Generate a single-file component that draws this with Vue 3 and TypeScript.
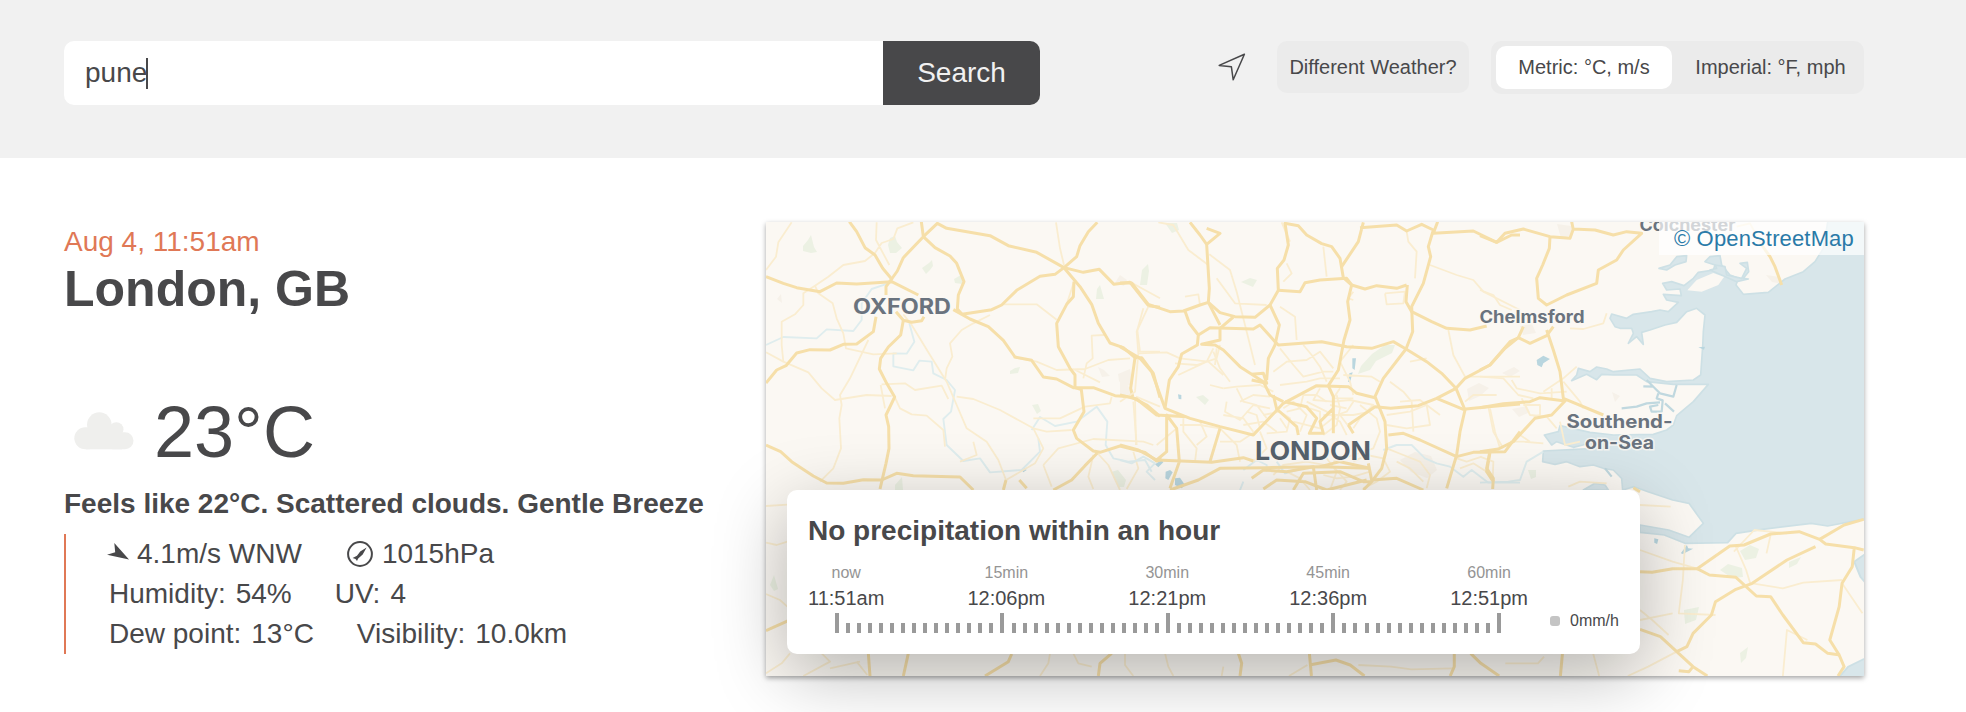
<script setup lang="ts">
import { ref } from 'vue'

interface Slot {
  offset: string
  time: string
}

const query = ref('pune')
const slots: Slot[] = [
  { offset: 'now', time: '11:51am' },
  { offset: '15min', time: '12:06pm' },
  { offset: '30min', time: '12:21pm' },
  { offset: '45min', time: '12:36pm' },
  { offset: '60min', time: '12:51pm' },
]
const minutes = Array.from({ length: 61 }, (_, i) => i)

// Road network, one group per map sector
const sectors = [
  {
    transform: 'translate(760 215) scale(.333333)',
    major: [
      'M18 185L70 205L110 218L180 230L230 204L290 207L395 200L475 240',
      'M268 20L290 50L315 98L345 120L368 160L395 192L378 215L378 240',
      'M484 20L490 65L430 128L412 168L395 192',
      'M490 65L532 25L560 40L690 62L745 92L830 112L912 158',
      'M490 65L525 98L570 123L590 145L612 200L595 240L592 282L606 298',
      'M580 284L630 312L685 335L730 376L765 426L815 436L850 486L890 492L940 518L1000 518L1065 542L1112 545L1160 570L1200 604',
      'M606 298L695 284L725 270L770 226L840 184L885 178L912 158L950 125L960 92L985 50L1012 22',
      'M912 158L970 172L1018 163L1062 208L1110 202L1165 272L1200 277',
      'M912 158L960 215L995 268L1015 325L1050 384L1090 398L1125 428L1145 428L1180 475L1200 548',
      'M942 200L940 245L920 268L890 325L895 395L930 460L945 480L945 518L964 524L972 590L940 645L950 670L1000 708L1020 712L1080 693L1155 712L1190 738L1205 732',
      'M1125 428L1112 520L1118 545',
      'M18 504L50 465L78 452L110 414L150 404L210 405L250 388L290 387L340 350L348 305',
      'M408 290L430 316L455 322L485 317L492 305M430 316L422 360L385 396L362 430L358 462L380 505L404 546L378 600L386 635L387 700L378 745L360 822',
      'M18 690L62 710L95 740L160 783L200 804L250 805L310 794L365 795L410 775L460 782L600 786L640 825',
      'M730 825L738 795M778 795L800 820M880 825L935 795L975 752L1012 714',
    ],
    minor: [
      'M95 22L55 82L48 125L18 165M350 22L348 75L388 150M460 22L412 40L400 72L365 84L345 114L315 138L250 150L205 185L165 212L130 235L130 270L105 298L65 320L65 390L70 440M165 212L175 235L218 265L230 310L250 355L258 400L340 418L410 415',
      'M18 412L70 440L145 472L185 520L225 555L320 540L395 543M325 375L270 490L240 540L245 570L238 610L243 700L220 760L180 800',
      'M430 298L455 330L510 420L560 500L590 570L620 640L680 680L715 735L738 795',
      'M362 510L375 580M365 508L435 505L465 525L545 512L565 552M590 545L640 552L720 585L820 640M404 546L420 580L455 598L500 602L550 645L555 695',
      'M690 300L640 325L605 345L570 385L577 425L560 460L555 495M730 268L830 268L890 314M888 22L900 100L912 150M942 200L920 268M1032 360L995 362L998 430L980 445L970 490M940 462L1020 502M760 427L830 440L890 465L975 462L1045 435L1110 430M1200 250L1145 220L1110 200M1150 280L1132 345L1140 410L1200 410',
      'M820 640L860 650L935 645M738 795L825 745L850 700L820 640M850 750L875 815M850 750L895 700L1000 672L1150 680L1180 690M1125 550L1128 690M820 610L900 610L975 575L1050 565L1055 545M1000 720L985 785L1000 822M640 680L650 720L600 740M1100 822L1135 760L1120 710M1012 714L1045 750L1080 825M1128 545L1200 575',
    ],
    rivers: [
      'M18 390L70 366L170 370L200 343L280 348L305 315L305 265L335 222L385 205M448 325L463 380L440 416L400 415L400 454L460 466L478 437L515 440L520 475L560 495L585 525L573 590L550 612L560 690L610 738L660 730L690 772L785 765L840 710L835 670',
      'M815 645L840 606L885 633L950 620L1010 575L1042 620L1037 690L1060 730L1105 740L1155 735L1175 770',
    ],
  },
  {
    transform: 'translate(1120 215) scale(.333333)',
    major: [
      'M210 22L240 60L260 88L300 55L260 40M260 88L268 220L265 262L300 330',
      'M0 204L35 204L85 268L150 290L190 288L240 270L265 262L300 293L345 305L405 307L450 270L475 226L472 160L492 135L505 90L495 25L535 32L560 60L605 86L635 95L660 130L670 188L695 210',
      'M195 288L208 325L235 360L232 390L185 417L175 455L148 495L135 580',
      'M235 360L270 338L400 342L420 330L465 380L475 390L605 380L680 395L755 400L820 380L858 402L920 440L965 475L1008 520L1035 585L1020 650L1010 720L980 820',
      'M340 306L300 340L300 375L245 388L285 390L310 405L360 455L430 500L450 540L490 560',
      'M395 478L430 475L440 505L395 495M450 270L478 330L465 390L445 430L440 495',
      'M475 226L540 230L555 203L600 195L680 190L695 210L735 222L770 212L830 220L860 210',
      'M730 22L715 80L665 155M720 38L760 35L830 30L860 48L905 28L940 45L925 95L932 125L910 205L875 275L878 350L858 402L790 490L765 545L795 620L800 700L785 760L755 800',
      'M953 20L940 55L1060 48L1130 82L1175 60L1200 60M862 210L858 260L875 290L935 320L980 340L1050 345L1100 333',
      'M695 210L683 260L690 315L672 375L655 465L625 512M1200 366L1170 380L1110 450L1035 490L1008 520L950 550L895 572L812 580L765 575L685 630',
      'M0 395L60 430L95 470L135 580L210 610L300 635L400 660L490 565L590 512L685 515L710 535L765 548M0 540L50 552L110 600L200 605M950 550L1030 583L1105 575L1200 567',
      'M460 540L470 582L530 635L535 660M495 560L560 575L590 610L568 655L610 655L600 620L640 580M625 512L640 545L640 655M0 690L55 705L110 735L275 742L370 728L400 738M110 735L140 710L140 600L170 640L178 740L150 820M300 640L270 740M150 825L235 795L300 760L440 758L600 755L750 760M745 745L755 795L830 790L910 825M805 660L850 655L900 675L1010 725L1060 712L1155 710L1200 650M1110 712L1100 770L1120 800',
      'M395 790L430 765L500 770L580 755L590 825M520 825L550 775L660 770L730 800L755 800L730 825M600 755L660 740L750 760M430 822L470 795L555 800L620 825L740 795M685 630L700 655',
    ],
    minor: [
      'M115 22L160 30L205 105L265 150M268 118L330 165L350 230L385 370L405 450M195 245L235 238L240 270M290 190L345 265L440 270M85 275L50 350L55 415L45 530L0 560M55 415L140 412L180 430L265 440L310 480',
      'M485 22L510 80M500 145L515 175L490 200M610 95L620 185M480 275L525 305L530 375M700 255L685 250L700 230M795 235L855 230L850 265L800 268L795 235M860 50L865 80L890 110L885 190M930 150L1010 180L1060 195L1090 230L1200 285M985 345L1000 420L1035 485L1200 485M870 440L920 430M810 500L850 530L875 560L880 650M840 560L900 555L960 600',
      'M310 520L350 515L420 510L460 530M320 560L315 590L360 615L400 570L450 580M350 520L370 560L410 570L440 610M310 600L370 610L400 650M460 470L500 440L560 435L600 410L640 460M480 400L520 450L550 485L610 470L640 470M550 390L575 420L600 455L620 500M700 390L660 440L690 500L700 540M670 480L755 485L780 500M480 510L560 500L600 490L660 490M490 580L520 560L560 600L540 650M600 520L580 555L640 560L690 555L760 570L720 610L700 640M640 600L700 600L750 590M560 560L620 590L660 620L680 660M520 620L600 640L650 600L680 590L700 560M720 570L770 610L780 650L760 700L700 720L640 740M650 540L660 580L650 630L610 660',
      'M165 445L230 450L290 430L300 390M175 480L260 440L280 400M280 410L300 460L330 500M190 610L190 650L230 700L225 740M240 620L260 665L230 690M300 640L350 690L360 740M110 690L170 640M40 560L50 690M420 640L360 680L300 680M420 650L440 700L400 740M800 600L870 590L920 570L930 630L860 640L800 630M1105 575L1120 650L1150 700M800 700L850 720L900 740L930 780L920 820M830 740L870 760L910 800M700 740L740 720L790 730L810 770L770 800L730 820M460 780L490 750L560 740L640 755L680 800L660 825M500 770L540 790L570 825M610 780L650 790L700 785L750 770M620 730L650 770L630 825',
      'M430 600L480 590L510 610L500 650L440 655M370 630L430 620L470 650M360 560L400 540L450 545M380 590L410 600L420 640M500 590L540 580L550 540L590 540L620 560M570 580L600 590L600 640M610 600L660 600L690 640M630 570L680 580M480 610L500 640M660 520L640 550L700 550M270 510L310 520M290 400L285 450M1010 730L1040 740L1085 725M1020 760L1060 745L1100 770M1035 560L1060 540L1130 540M180 630L240 630L300 640',
    ],
    rivers: [
      'M0 735L35 745L70 725L105 745L80 770L105 795M370 765L410 735L440 750L440 770M470 740L495 775L530 765M790 705L830 690L875 690L915 730L950 745L990 755L1030 785L1055 765L1105 803L1200 803M370 800L360 825',
    ],
  },
  {
    transform: 'translate(1480 215) scale(.333333)',
    major: [
      'M0 62L50 82L75 55L130 42L210 65L270 70L280 42L345 45L400 60L440 50L485 55L430 105L410 135L355 165L350 205L260 240L200 270L175 250L170 190L188 150L208 100L210 65M275 20L280 45',
      'M0 465L30 450L75 400L115 368L130 335M115 368L150 385L200 362L220 335M200 345L220 405L240 470L250 550L370 600M0 578L70 566L150 560L180 548L255 558L215 600L165 610L100 680L55 702L0 710',
      'M845 90L870 125L885 155L905 210M30 708L20 760L40 790L38 822M460 818L480 830',
    ],
    minor: [
      'M0 225L40 240L60 270L95 285M270 340L310 342L370 325L380 295M0 485L70 490L115 540L160 550M95 495L110 520L180 535L260 530M190 530L250 490L290 455M215 520L215 555M250 500L300 560L310 580M125 550L150 600L200 605L230 640M130 570L180 570L180 600L160 605M30 580L45 650L60 700M90 680L130 680L190 685M120 660L150 680M0 725L40 740L38 800M240 620L255 690L300 680M265 815L300 800L380 805M770 35L810 25L845 90',
    ],
    rivers: ['M0 803L85 800L120 795L140 740L190 710'],
  },
  {
    transform: 'translate(760 480) scale(.333333)',
    major: [
      'M18 452L85 422M325 520L330 588M445 520L430 588M755 522L745 545L675 588M1055 520L1020 550L1015 588M1435 520L1445 550L1440 588',
    ],
    minor: [
      'M18 78L82 74M18 188L50 195L82 185M18 342L60 360L82 380M18 580L65 550L90 520M185 520L210 545L130 588M290 545L322 585M210 565L300 545M870 520L865 550L840 588M940 520L955 550L995 560M1095 520L1095 555L1120 588M1215 520L1225 560L1240 588M1390 560L1385 588',
    ],
    rivers: [],
  },
  {
    transform: 'translate(1240 480) scale(.408163 .333333)',
    major: [
      'M980 275L1010 277L1060 266L1120 266L1200 198L1235 195L1300 162L1370 155L1420 178L1435 192L1505 203L1500 260L1475 310L1468 380L1445 480L1468 525L1480 560L1465 588',
      'M1420 178L1480 135L1528 118M1120 266L1150 285L1215 292L1265 348L1300 350L1330 405L1380 488L1410 492L1440 520L1470 525M1410 200L1340 240L1255 310L1215 328L1165 365L1155 405L1110 460L1095 500L1070 515M980 448L1030 470L1070 515L1110 560L1145 588M1110 560L1100 575L1075 572M1505 203L1528 210',
      'M170 520L175 588M170 555L235 540L270 555L305 588M525 520L525 560L515 588M565 520L590 550L635 588M790 520L785 588',
    ],
    minor: [
      'M980 210L1060 245L1120 266M1090 195L1085 300L1075 400L1165 405M980 420L1060 400M1300 165L1290 220M1215 200L1240 270L1250 310M1255 310L1330 325L1380 308L1475 300M1475 310L1525 400M1390 480L1340 450L1330 588M950 588L1000 560L1070 515M980 75L1055 80M865 520L880 588M120 588L165 555M290 555L370 560L420 568L520 565M650 550L730 550L745 530M980 390L1010 420L1050 465M1210 215L1260 150L1340 160',
    ],
    rivers: [],
  },
]

const woods = [
  'M890 238l5-2 2 6 5 6-6 5h-6l-2-8z',
  'M803 246l5-6 3-5 3 12 3 5-6 1-8-2z',
  'M922 268l7-5 3-3 1 6-3 4-4 4z',
  'M954 279l7-4 3 3-2 6-7-1z',
  'M1142 270l6-6 1 7-2 14-7 0z',
  'M1097 289l3-4 4 14-8 0z',
  'M1010 371l5-3 5-1-2 6-8 1z',
  'M1032 405l6-1 3 7-4 3z',
  'M895 485l7-8 1 13-8 0z',
  'M1111 472l7-2 8 10-2 7-5 0z',
  'M1372 354l13-9 10 0-3 8-16 8-6 9-12 4 3-8z',
  'M1241 282l9-4 7 2-4 7z',
  'M1196 397l7-2 6 5-4 5z',
  'M1165 223l12 0 2 7-7 3z',
  'M1740 551l10-6 9 4-3 9-11 2z',
  'M1720 570l8-6 14 4 1 9-11 1z',
  'M1684 610l15-3-3 13-11 4z',
  'M1740 653l8-6-2 11-5 5z',
  'M1789 562l12-5-4 7-8 4z',
  'M770 585l4-10 4 14-4 2z',
  'M1528 470l8 0 0 7-5 2z',
]

const suburbs = [
  'M1118 374l12-5 3 15-9 3-5-6z',
  'M1115 283l5-8 7 5-3 6z',
  'M1467 389l12-6 10 5-9 8-11 5z',
  'M1557 224l14 2 2 9-12 3z',
  'M1512 409l15-3 3 6-11 5z',
  'M1120 380l12 9-3 9-9-2z',
  'M1502 373l12-6 6 4-10 6z',
  'M1400 460l15-8 16 4 6 14-10 8-16-6z',
  'M777 299l4-5 1 9z',
  'M1098 367l6 3 6 6-8 1z',
  'M1520 326l12-2 4 9-13 2z',
  'M1612 392l8 4-5 6z',
  'M1766 275l14 2 3 7-11-2z',
]
</script>

<template>
  <div class="page">
    <header class="topbar">
      <form class="search" @submit.prevent>
        <div class="field"><span>{{ query }}</span><i class="caret"></i></div>
        <button class="submit" type="submit">Search</button>
      </form>
      <div class="tools">
        <svg class="locate" viewBox="0 0 28 28" aria-hidden="true">
          <path d="M26.4 1.2L1.2 12.4L13.4 13.8L15.2 26.8Z" />
        </svg>
        <button class="different" type="button">Different Weather?</button>
        <div class="units">
          <span class="unit active">Metric: °C, m/s</span>
          <span class="unit">Imperial: °F, mph</span>
        </div>
      </div>
    </header>

    <main class="content">
      <section class="current">
        <p class="date">Aug 4, 11:51am</p>
        <h1 class="city">London, GB</h1>
        <div class="temperature">
          <svg class="cloud" viewBox="0 0 60 38" aria-hidden="true">
            <rect x="0.300" y="15.300" width="25" height="22" rx="11" />
            <circle cx="25.300" cy="12.600" r="12.300" />
            <circle cx="42.300" cy="17.400" r="7.200" />
            <rect x="30" y="20.300" width="29.500" height="17" rx="8.500" />
            <rect x="12" y="16" width="36" height="21.300" />
          </svg>
          <span>23°C</span>
        </div>
        <p class="feels">Feels like 22°C. Scattered clouds. Gentle Breeze</p>
        <ul class="details">
          <li>
            <span class="item wind">
              <svg class="wind-icon" viewBox="0 0 22 17" aria-hidden="true">
                <path d="M7.3 0L22 16.5L0 11.8L8.2 9.2Z" />
              </svg>4.1m/s WNW
            </span>
            <span class="item">
              <svg class="pressure-icon" viewBox="0 0 26 26" aria-hidden="true">
                <circle cx="13" cy="13" r="11.9" />
                <path d="M19.6 6.4L15.700 13.6L11.200 17.6L10 20L8.500 18L5.600 16.9L10 14.8L13.200 10.6Z" />
              </svg>1015hPa
            </span>
          </li>
          <li>
            <span class="item"><b>Humidity:</b>54%</span>
            <span class="item"><b>UV:</b>4</span>
          </li>
          <li>
            <span class="item"><b>Dew point:</b>13°C</span>
            <span class="item"><b>Visibility:</b>10.0km</span>
          </li>
        </ul>
      </section>

      <section class="map">
        <svg class="tiles" viewBox="766 222 1098 454" aria-hidden="true">
          <rect class="land" x="766" y="222" width="1098" height="454" />
          <path v-for="d in suburbs" :key="d" class="suburb" :d="d" />
          <path v-for="d in woods" :key="d" class="wood" :d="d" />
          <g transform="translate(1480 215) scale(.333333)">
            <path
              class="sea"
              d="M1165 10L1045 10L1030 100L1005 140L970 170L915 192L865 232L790 238L768 210L775 190L750 180L725 150L720 122L690 125L675 140L705 150L700 165L655 172L640 190L612 212L575 200L548 205L560 225L600 222L604 242L550 238L560 255L595 262L565 290L540 285L515 290L460 298L440 310L395 297L390 310L405 335L420 340L455 340L460 355L445 385L470 365L490 388L485 352L510 345L555 330L590 322L620 290L650 280L675 300L670 350L668 395L662 480L640 495L560 500L510 490L480 462L400 470L380 462L350 456L330 470L295 460L290 480L275 497L320 478L350 494L365 478L400 480L470 480L500 500L580 508L685 508L640 560L590 602L580 630L560 645L520 658L400 660L330 652L240 632L235 650L193 660L215 690L230 680L280 697L320 687L345 700L190 708L188 740L225 748L260 740L300 755L340 750L370 760L400 765L425 790L428 825L462 815L504 830L578 855L627 865L670 925L627 967L566 945L480 930L480 952L553 960L615 985L743 983L768 955L847 943L994 925L1043 933L1165 910Z"
            />
            <path class="sea" d="M690 165L710 160L705 150L735 155L740 180L785 190L800 160L780 145L802 142L806 170L790 190L805 192L770 200ZM537 160L570 150L590 125L620 122L618 140L585 150L560 165ZM310 825L345 805L375 810L385 825Z" />
            <path class="isle" d="M622 226L650 195L700 174L732 186L715 210L665 230Z" />
            <path class="creek" d="M490 514L520 515L540 535L580 545L590 510M535 535L530 550L548 556L545 590L515 590L510 575L535 570M540 562L500 565L470 575L425 580M555 565L582 590M500 495L535 530M375 760L395 785" />
            <path class="lake" d="M170 435L190 422L210 432L190 445L185 457L172 450ZM655 397L675 395L672 404Z" />
          </g>
          <g transform="translate(1240 480) scale(.408163 .333333)">
            <path class="sea" d="M1540 215L1505 245L1520 290L1540 320ZM1540 530L1490 560L1465 595H1540Z" />
            <path class="lake" d="M1015 175L1025 178L1022 192L1015 188ZM1080 220L1095 195L1098 205L1110 206L1085 222Z" />
          </g>
          <g transform="translate(1120 215) scale(.333333)">
            <path class="lake" d="M697 430H708L704 465L697 460ZM688 475L698 472L690 502L684 500ZM174 538L184 540V553L176 552ZM105 748L125 735L130 742L115 757ZM137 770L150 765L158 772L145 795L136 790ZM165 790L180 788L195 810L185 820L165 810ZM-295 765L-288 758L-280 765L-290 772Z" />
          </g>
          <g v-for="s in sectors" :key="s.transform" :transform="s.transform">
            <path v-for="d in s.rivers" :key="d" class="river" :d="d" />
            <path v-for="d in s.minor" :key="d" class="minor" :d="d" />
            <path v-for="d in s.major" :key="d" class="major" :d="d" />
          </g>
          <g class="labels">
            <text x="853" y="313.500" font-size="21" textLength="98" lengthAdjust="spacingAndGlyphs">OXFORD</text>
            <text class="capital" x="1255" y="459.500" font-size="26" textLength="116" lengthAdjust="spacingAndGlyphs">LONDON</text>
            <text x="1479.500" y="322.500" font-size="17" textLength="105" lengthAdjust="spacingAndGlyphs">Chelmsford</text>
            <text x="1566.500" y="428" font-size="18.500" textLength="106" lengthAdjust="spacingAndGlyphs">Southend-</text>
            <text x="1585" y="448.500" font-size="18.500" textLength="69" lengthAdjust="spacingAndGlyphs">on-Sea</text>
            <text x="1639.500" y="231" font-size="17" textLength="96" lengthAdjust="spacingAndGlyphs">Colchester</text>
          </g>
        </svg>
        <div class="attribution">© OpenStreetMap</div>
        <div class="rain">
          <h2>No precipitation within an hour</h2>
          <div class="slots">
            <div v-for="s in slots" :key="s.time" class="slot">
              <small>{{ s.offset }}</small>
              <span>{{ s.time }}</span>
            </div>
          </div>
          <div class="scale">
            <div class="ruler">
              <i v-for="m in minutes" :key="m" :class="{ tall: m % 15 === 0 }"></i>
            </div>
            <div class="legend"><i></i>0mm/h</div>
          </div>
        </div>
      </section>
    </main>
  </div>
</template>

<style>
body {
  margin: 0;
  background: #fff;
}
</style>

<style scoped>
.page {
  width: 1966px;
  height: 712px;
  overflow: hidden;
  font-family: "Liberation Sans", Arial, sans-serif;
  font-size: 28px;
  color: #48484a;
  background: #fff;
}
p, h1, h2, ul {
  margin: 0;
  padding: 0;
}
button {
  border: 0;
  padding: 0;
  font: inherit;
  color: inherit;
}
.topbar {
  box-sizing: border-box;
  height: 158px;
  padding: 41px 102px 0 64px;
  display: flex;
  justify-content: space-between;
  align-items: flex-start;
  background: #f1f1f1;
}
.search {
  display: flex;
  width: 976px;
  height: 64px;
  border-radius: 10px;
  overflow: hidden;
}
.field {
  flex: 1;
  display: flex;
  align-items: center;
  padding-left: 21px;
  background: #fff;
}
.caret {
  width: 2px;
  height: 31px;
  margin-left: -1px;
  background: #48484a;
}
.submit {
  width: 157px;
  background: #48484a;
  color: #f1f1f1;
}
.tools {
  display: flex;
  font-size: 20px;
}
.locate {
  width: 28px;
  height: 28px;
  margin: 12px 31px 0 0;
}
.locate path {
  fill: none;
  stroke: #48484a;
  stroke-width: 1.500;
  stroke-linejoin: round;
}
.different {
  width: 192px;
  height: 52px;
  margin-right: 22px;
  border-radius: 10px;
  background: #ebebeb;
}
.units {
  box-sizing: border-box;
  display: flex;
  width: 373px;
  height: 53px;
  padding: 5px;
  border-radius: 10px;
  background: #ebebeb;
}
.unit {
  width: 176px;
  height: 43px;
  line-height: 43px;
  text-align: center;
  border-radius: 10px;
  flex: none;
}
.unit + .unit {
  width: 197px;
}
.active {
  background: #fff;
}
.content {
  display: flex;
  padding: 64px 102px 0 64px;
}
.current {
  width: 702px;
}
.date {
  line-height: 40px;
  color: #e07856;
}
.city {
  font-size: 50px;
  line-height: 54px;
}
.temperature {
  display: flex;
  align-items: center;
  height: 108px;
  margin-top: 62px;
  font-size: 72px;
}
.cloud {
  width: 60px;
  height: 38px;
  margin: -3px 20px 0 10px;
  fill: #efefed;
}
.feels {
  line-height: 40px;
  margin: -2px 0 10px;
  font-weight: 700;
  white-space: nowrap;
}
.details {
  height: 120px;
  padding-left: 43px;
  border-left: 2px solid #e07856;
  list-style: none;
}
.details li {
  display: flex;
  gap: 43px;
  line-height: 40px;
  white-space: nowrap;
}
.item {
  display: flex;
  align-items: center;
}
.item b {
  font-weight: 400;
  margin-right: 10px;
}
.wind {
  margin-right: 2px;
}
.wind-icon {
  width: 22px;
  height: 17px;
  margin: -5px 8px 0 -2px;
}
.wind-icon path,
.pressure-icon path {
  fill: #48484a;
}
.pressure-icon {
  width: 26px;
  height: 26px;
  margin-right: 9px;
}
.pressure-icon circle {
  fill: none;
  stroke: #48484a;
  stroke-width: 2;
}
.map {
  position: relative;
  width: 1098px;
  height: 454px;
  box-shadow: 0 2px 5px rgba(0, 0, 0, 0.36);
}
.tiles {
  display: block;
  width: 1098px;
  height: 454px;
}
.land,
.isle {
  fill: #fbf8f3;
}
.wood {
  fill: #ecf1e3;
}
.suburb {
  fill: #f6f1e9;
}
.sea {
  fill: #d8e6ea;
  stroke: #cde0e5;
  stroke-width: 5;
  stroke-linejoin: round;
}
.lake {
  fill: #b9d6df;
}
.creek,
.river,
.minor,
.major {
  fill: none;
  stroke-linejoin: round;
  vector-effect: non-scaling-stroke;
}
.creek {
  stroke: #c0d8df;
  stroke-width: 2.200;
}
.river {
  stroke: #dfedee;
  stroke-width: 1.900;
}
.minor {
  stroke: #faedd0;
  stroke-width: 1.800;
}
.major {
  stroke: #f6dfa9;
  stroke-width: 3;
}
.labels text {
  font-family: Inter, "Liberation Sans", sans-serif;
  font-weight: 650;
  fill: #6a737e;
  stroke: #fbf8f3;
  stroke-width: 3;
  stroke-opacity: 0.8;
  paint-order: stroke;
}
.labels .capital {
  fill: #56616c;
}
.attribution {
  position: absolute;
  top: 0;
  right: 0;
  width: 205px;
  height: 33px;
  box-sizing: border-box;
  padding-left: 15px;
  line-height: 33px;
  font-size: 22px;
  letter-spacing: 0.150px;
  white-space: nowrap;
  color: #2a7aa8;
  background: rgba(255, 255, 255, 0.7);
}
.rain {
  position: absolute;
  left: 21px;
  top: 268px;
  box-sizing: border-box;
  width: 853px;
  height: 164px;
  padding: 21px;
  border-radius: 10px;
  background: #fff;
  box-shadow: 0 20px 72px rgba(0, 0, 0, 0.28);
}
.rain h2 {
  font-size: 28px;
  line-height: 40px;
}
.slots {
  display: flex;
  justify-content: space-between;
  width: 720px;
  margin-top: 10px;
}
.slot {
  display: flex;
  flex-direction: column;
  align-items: center;
  font-size: 20px;
  line-height: 26px;
}
.slot small {
  font-size: 16px;
  line-height: 24px;
  color: #949494;
}
.scale {
  display: flex;
  align-items: flex-start;
  padding-left: 27px;
  margin-top: 2px;
}
.ruler {
  display: flex;
  align-items: flex-end;
  justify-content: space-between;
  width: 666px;
  height: 20px;
}
.ruler i {
  width: 4px;
  height: 10px;
  background: #9a9a9a;
}
.ruler .tall {
  height: 20px;
}
.legend {
  display: flex;
  align-items: center;
  height: 16px;
  margin-left: 49px;
  font-size: 16px;
}
.legend i {
  width: 10px;
  height: 10px;
  margin-right: 10px;
  border-radius: 3px;
  background: #c4c4c4;
}
</style>
